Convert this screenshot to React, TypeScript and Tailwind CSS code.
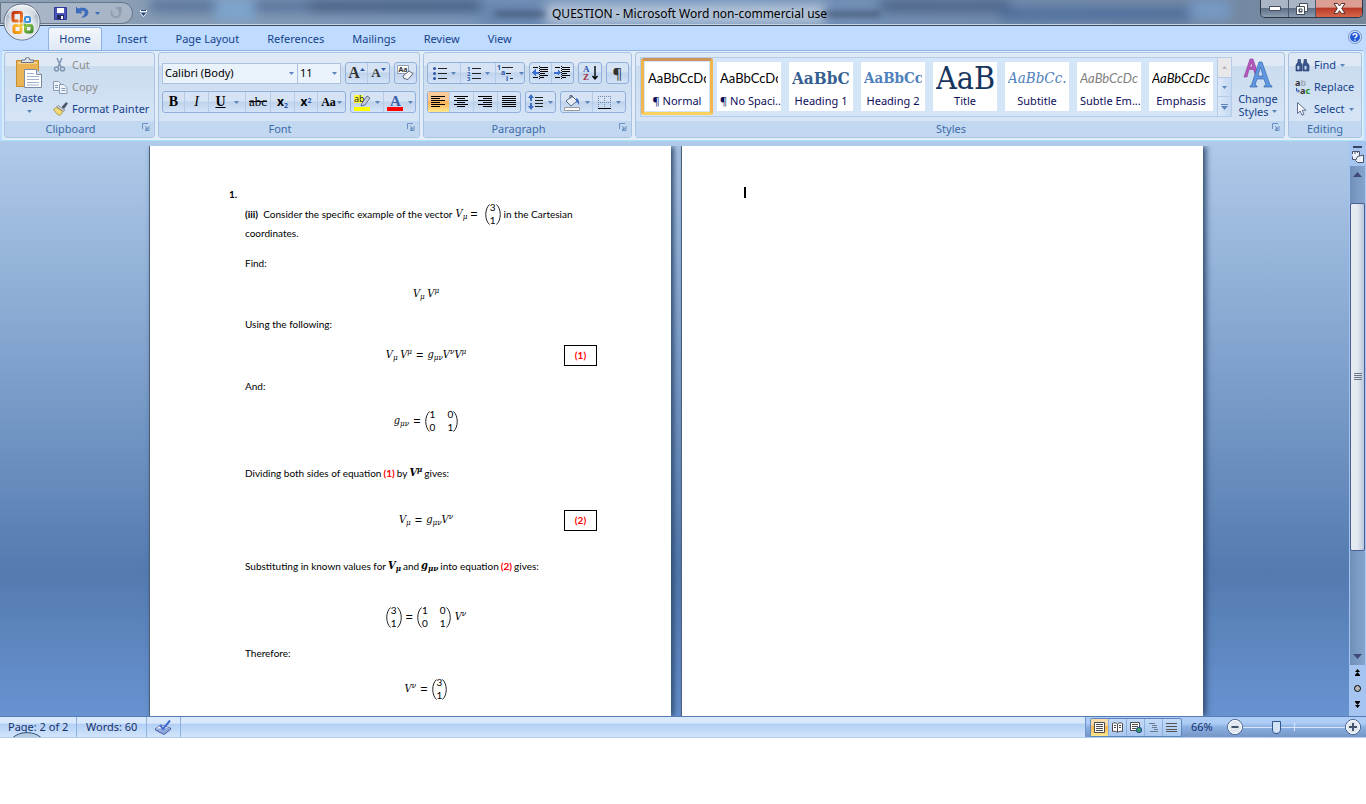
import type { ReactNode } from 'react';
import clsx from 'clsx';

const tabs = ['Insert', 'Page Layout', 'References', 'Mailings', 'Review', 'View'];

const styles = [
  { name: '¶ Normal', sample: 'AaBbCcDc', look: 'font-[Lato] text-[13px] text-black' },
  { name: '¶ No Spaci...', sample: 'AaBbCcDc', look: 'font-[Lato] text-[13px] text-black' },
  { name: 'Heading 1', sample: 'AaBbCc', look: "font-['DejaVu_Serif_Condensed','DejaVu_Serif',serif] text-[17px] font-bold text-[#365f91]" },
  { name: 'Heading 2', sample: 'AaBbCc', look: "font-['DejaVu_Serif_Condensed','DejaVu_Serif',serif] text-[15px] font-bold text-[#4f81bd]" },
  { name: 'Title', sample: 'AaB', look: "font-['DejaVu_Serif_Condensed','DejaVu_Serif',serif] text-[32px] text-[#17365d]" },
  { name: 'Subtitle', sample: 'AaBbCc.', look: "font-['DejaVu_Serif_Condensed','DejaVu_Serif',serif] text-[15px] italic text-[#4f81bd]" },
  { name: 'Subtle Em...', sample: 'AaBbCcDc', look: 'font-[Lato] text-[13px] italic text-[#808080]' },
  { name: 'Emphasis', sample: 'AaBbCcDc', look: 'font-[Lato] text-[13px] italic text-black' },
];

/* ---------- small shared pieces ---------- */

function Arrow({ className = 'fill-[#5b84bd]' }: { className?: string }) {
  return (
    <svg width="5" height="3" viewBox="0 0 5 3" className={clsx('shrink-0', className)} aria-hidden="true">
      <path d="M0 0h5L2.500 3z" />
    </svg>
  );
}

function Group({ title, className, launcher = true, children }: { title: string; className?: string; launcher?: boolean; children: ReactNode }) {
  return (
    <section
      aria-label={title}
      className={clsx(
        'flex flex-col overflow-hidden rounded-[3px] border border-[#a9c4e2] bg-linear-to-b from-[#dee9f5] from-15% via-[#cbdcef] via-16% to-[#d9e7f8]',
        className,
      )}
    >
      <div className="flex h-[68px] min-w-0">{children}</div>
      <footer className="flex h-4 items-center bg-[#c1d8f0] text-[#3e6aaa]">
        <span className="flex-1 text-center">{title}</span>
        {launcher && (
          <button aria-label={`${title} dialog`} className="mr-1 mb-1 ml-[6px]">
            <svg width="8" height="8" viewBox="0 0 8 8" fill="none" stroke="#6b8fc0">
              <path d="M.5 6V.5H6M3 3l3 3M7 3v4.500H3" />
              <path d="M5 4.500v2H3.500z" fill="#6b8fc0" />
            </svg>
          </button>
        )}
      </footer>
    </section>
  );
}

function Bar({ children }: { children: ReactNode }) {
  return (
    <div className="flex h-[22px] divide-x divide-[#b4cbe8] rounded-[3px] border border-[#90b0db] bg-linear-to-b from-[#d5e3f4] from-45% via-[#bfd3ec] via-50% to-[#d3e3f8]">
      {children}
    </div>
  );
}

function Tool({ label, width, drop, active, children }: { label: string; width: string; drop?: boolean; active?: boolean; children: ReactNode }) {
  return (
    <button
      aria-label={label}
      className={clsx(
        'flex items-center justify-center gap-1 leading-5',
        width,
        active && 'bg-linear-to-b from-[#fbc994] from-40% via-[#fbb054] via-50% to-[#fee98d]',
      )}
    >
      {children}
      {drop && <Arrow />}
    </button>
  );
}

function Lines({ rows }: { rows: [number, number][] }) {
  return (
    <svg width="15" height="13" viewBox="0 0 15 13" stroke="#000" shapeRendering="crispEdges">
      {rows.map(([x, w], i) => (
        <path key={i} d={`M${x} ${i * 2 + 0.5}h${w}`} />
      ))}
    </svg>
  );
}

/* ---------- title bar ---------- */

function OfficeLogo() {
  return (
    <svg width="38" height="42" viewBox="0 0 38 42" aria-hidden="true">
      <defs>
        <radialGradient id="orb" cx=".5" cy=".65" r=".6">
          <stop offset="0" stopColor="#ffffff" />
          <stop offset=".6" stopColor="#dfe4ec" />
          <stop offset="1" stopColor="#8f9db0" />
        </radialGradient>
        <linearGradient id="orbTop" x1="0" y1="0" x2="0" y2="1">
          <stop offset="0" stopColor="#fff" stopOpacity=".9" />
          <stop offset="1" stopColor="#fff" stopOpacity="0" />
        </linearGradient>
        <linearGradient id="red" x1="0" y1="0" x2="1" y2="1">
          <stop offset="0" stopColor="#c5300f" />
          <stop offset="1" stopColor="#f28a2a" />
        </linearGradient>
        <linearGradient id="gold" x1="0" y1="1" x2="1" y2="0">
          <stop offset="0" stopColor="#f08a0c" />
          <stop offset="1" stopColor="#fdd04e" />
        </linearGradient>
        <linearGradient id="leaf" x1="1" y1="1" x2="0" y2="0">
          <stop offset="0" stopColor="#3c8a2a" />
          <stop offset="1" stopColor="#9ccb4b" />
        </linearGradient>
      </defs>
      <circle cx="19" cy="22" r="18" fill="url(#orb)" stroke="#5a6b80" />
      <circle cx="19" cy="22" r="17" fill="none" stroke="#eef2f7" />
      <ellipse cx="19" cy="13" rx="14" ry="8" fill="url(#orbTop)" />
      <g fill="none">
        <rect x="10" y="12.500" width="8.500" height="8.500" rx="1.500" stroke="url(#red)" strokeWidth="3" />
        <rect x="22" y="17" width="5" height="5" rx="1" stroke="#3f8fd8" strokeWidth="2" />
        <rect x="11" y="25.500" width="7" height="7" rx="1.500" stroke="url(#gold)" strokeWidth="3" />
        <rect x="22.500" y="25.500" width="6.500" height="6.500" rx="1.500" stroke="url(#leaf)" strokeWidth="3" />
      </g>
      {/* loose squares where the four frames meet */}
      <path d="M16 22.500V19M20.500 15v3M15.500 24h3.500M20.500 29.500v-3.500" stroke="#f4f6f9" />
      <path d="M17 20h2.500v2.500H17z" fill="#f26b21" />
      <path d="M20.500 20H23v2.500h-2.500z" fill="#56a9e8" />
      <path d="M17 23.500h2.500V26H17z" fill="#f8b62c" />
      <path d="M20.500 23.500H23V26h-2.500z" fill="#77b843" />
    </svg>
  );
}

function TitleBar() {
  return (
    <header className="relative flex h-[26px] items-center overflow-hidden border-b border-[#39495e] bg-linear-to-r from-[#8fa0b3] via-[#6f91bd] via-50% to-[#76879c] pt-[2px]">
      {/* glass blotches behind the caption */}
      <div className="absolute inset-0 blur-[6px]" aria-hidden="true">
        <div className="absolute left-[150px] h-3 w-[170px] bg-[#56729a]" />
        <div className="absolute left-[215px] h-5 w-[40px] bg-[#7da4ce]" />
        <div className="absolute left-[310px] h-3 w-[180px] bg-[#425b80]" />
        <div className="absolute left-[480px] h-7 w-[70px] bg-[#6887b0]" />
        <div className="absolute left-[545px] top-1 h-5 w-[280px] bg-[#b4c4d7]" />
        <div className="absolute left-[880px] h-3 w-[130px] bg-[#4a6286]" />
        <div className="absolute left-[1000px] top-2 h-3 w-[200px] bg-[#4c6c9c]" />
        <div className="absolute left-[1190px] h-5 w-[40px] bg-[#7699c5]" />
      </div>
      <div className="absolute inset-0 blur-[3px]" aria-hidden="true">
        <div className="absolute left-[495px] top-3 h-1 w-[50px] bg-[#3a4d69]" />
        <div className="absolute left-[825px] top-3 h-1 w-[55px] bg-[#3a4d69]" />
      </div>
      <div className="absolute inset-x-0 bottom-0 h-px bg-[#c9d5e2]" />
      <div className="relative flex h-[22px] w-[133px] items-center self-start rounded-r-full border border-[#65758a] bg-[#b3bfce]/70 pl-[53px]">
        <button aria-label="Save">
          <svg width="13" height="13" viewBox="0 0 13 13">
            <path d="M.5.5h12v12h-12z" fill="#4b55b8" stroke="#303a96" />
            <path d="M3 1h7v5H3z" fill="#fff" />
            <path d="M3 8h7v4H3z" fill="#23285c" />
            <path d="M7 9h2v3H7z" fill="#fff" />
          </svg>
        </button>
        <button aria-label="Undo" className="ml-[9px]">
          <svg width="13" height="12" viewBox="0 0 13 12">
            <path d="M0 0v6h6L4 4.300c3-1.500 5.500-.500 5 2.200-.400 1.500-1.500 2.500-3 4C10 10 12 8 12 5.500 12 1.500 7-.200 2 2z" fill="#3c6fc4" stroke="#2a559f" strokeWidth=".5" />
          </svg>
        </button>
        <span className="ml-[6px]"><Arrow className="fill-[#3d6eb5]" /></span>
        <button aria-label="Redo" className="ml-[10px]">
          <svg width="12" height="12" viewBox="0 0 12 12" fill="none" stroke="#8d9cb0" strokeWidth="2">
            <path d="M8.500 2.500A4.300 4.300 0 1 1 2 4M6 1h4.500v4" />
          </svg>
        </button>
      </div>
      <button aria-label="Customize Quick Access Toolbar" className="relative ml-[7px]">
        <svg width="7" height="7" viewBox="0 0 7 7"><path d="M0 0h7v2H0zM0 3h7L3.500 7z" fill="#fff" /><path d="M1 0h5v1H1zM1 3h5L3.500 6z" fill="#25467b" /></svg>
      </button>
      <h1 className="relative ml-[405px] text-[12px] whitespace-nowrap text-black">QUESTION - Microsoft Word non-commercial use</h1>
      <div className="absolute top-0 right-[3px] flex h-[18px] overflow-hidden rounded-b-[5px] border border-t-0 border-[#2c3748]">
        <button aria-label="Minimize" className="flex w-7 items-center justify-center border-r border-[#4c5a6e] bg-linear-to-b from-[#a9b5c5] from-45% via-[#5f7087] via-50% to-[#8d9db2]">
          <svg width="12" height="5" viewBox="0 0 12 5"><path d="M.5.5h11v4H.5z" fill="#fff" stroke="#424c5a" /></svg>
        </button>
        <button aria-label="Restore" className="flex w-[27px] items-center justify-center border-r border-[#4c5a6e] bg-linear-to-b from-[#a9b5c5] from-45% via-[#5f7087] via-50% to-[#8d9db2]">
          <svg width="12" height="12" viewBox="0 0 12 12" fill="#fff" stroke="#424c5a">
            <path d="M3.500.500h8v8h-8z" />
            <path fillRule="evenodd" d="M.5 3.500h8v8h-8zM3 6v3h3V6z" />
          </svg>
        </button>
        <button aria-label="Close" className="flex w-[46px] items-center justify-center bg-linear-to-b from-[#dc9d93] from-40% via-[#b83a28] via-50% to-[#d8674a]">
          <svg width="13" height="11" viewBox="0 0 13 11"><path d="M1 .500h3.500l2 2.500 2-2.500H12L8.700 5.400l3.300 5H8.500l-2-2.700-2 2.700H1l3.300-5z" fill="#fff" stroke="#54312d" /></svg>
        </button>
      </div>
    </header>
  );
}

function TabRow() {
  return (
    <nav className="flex h-6 items-end bg-[#bfdbff] pl-12 text-[#15428b]">
      <button className="mr-px h-[23px] w-[54px] rounded-t-[3px] border border-b-0 border-[#8db2e3] bg-linear-to-b from-[#f3f7fc] to-[#dfe9f5] pt-px">Home</button>
      {tabs.map((tab) => (
        <button key={tab} className="h-[23px] px-[14px] pt-[2px]">{tab}</button>
      ))}
      <button aria-label="Help" className="mr-1 mb-[6px] ml-auto">
        <svg width="14" height="14" viewBox="0 0 14 14">
          <circle cx="7" cy="7" r="6.500" fill="#d7e6fb" stroke="#6f8fca" />
          <circle cx="7" cy="7" r="5" fill="#2159d6" />
          <path d="M5 5.500C5 3.200 9 3.200 9 5.300 9 6.700 7 6.700 7 8.300M7 9.500v1.300" fill="none" stroke="#fff" strokeWidth="1.400" />
        </svg>
      </button>
    </nav>
  );
}

/* ---------- ribbon groups ---------- */

function Clipboard() {
  return (
    <Group title="Clipboard" className="w-[151px]">
      <button className="flex w-12 flex-col items-center pt-1 text-[#15428b]">
        <svg width="28" height="31" viewBox="0 0 28 31">
          <path d="M1.500 3.500h22v26h-22z" fill="#eab455" stroke="#c58d34" />
          <path d="M3 5h19v2H3z" fill="#f6d08a" />
          <path d="M6.500 5.500V3h3.500a2.500 2.500 0 0 1 5 0h3.500v2.500z" fill="#dde1e8" stroke="#6d7582" />
          <path d="M9.500 12.500h12l5 5v13h-17z" fill="#fff" stroke="#7a8ba6" />
          <path d="M21.500 12.500v5h5" fill="#dbe6f5" stroke="#7a8ba6" />
          <path d="M12 16.500h7M12 19.500h12M12 22.500h12M12 25.500h12M12 28h12" stroke="#9fb1cd" />
        </svg>
        <span className="mt-[2px] leading-4">Paste</span>
        <span className="mt-1"><Arrow /></span>
      </button>
      <div className="flex flex-col pt-px text-[#15428b]">
        <button className="flex h-[22px] items-center gap-[6px] text-[#8d8d8d]">
          <svg width="13" height="14" viewBox="0 0 13 14" fill="none" stroke="#8095b0" strokeWidth="1.500">
            <path d="M4 0l4 9M9 0L5 9" />
            <circle cx="3.500" cy="11" r="2" /><circle cx="9.500" cy="11" r="2" />
          </svg>
          Cut
        </button>
        <button className="flex h-[22px] items-center gap-1 text-[#8d8d8d]">
          <svg width="15" height="13" viewBox="0 0 15 13" fill="#eef3fa" stroke="#8a9bb5">
            <path d="M.5.500h5l3 3v6h-8z" /><path d="M6.500 3.500h4.500l3 3v6H6.500z" />
            <path d="M2 4.500h3M2 6.500h3M8.500 7.500h4M8.500 9.500h4" />
          </svg>
          Copy
        </button>
        <button className="flex h-[22px] items-center gap-1">
          <svg width="15" height="14" viewBox="0 0 15 14">
            <path d="M9 5l4-4.500 1.500 1L11 6.500z" fill="#4d5a70" stroke="#333e50" strokeWidth=".6" />
            <path d="M5 3.500L12 8 10 9.500 3.500 5z" fill="#c7ccd6" stroke="#6a7078" strokeWidth=".6" />
            <path d="M3.500 5.500L10 9.500 7 13.500 4 12 .500 7.500z" fill="#f2dc78" stroke="#9b8127" strokeWidth=".7" />
          </svg>
          Format Painter
        </button>
      </div>
    </Group>
  );
}

function Font() {
  return (
    <Group title="Font" className="w-[262px]">
      <div className="flex flex-col gap-[7px] pt-[9px] pl-[3px]">
        <div className="flex gap-1">
          <div className="flex">
            <label className="relative flex items-center">
              <span className="sr-only">Font name</span>
              <select className="h-[21px] w-[136px] appearance-none border border-[#abc1de] bg-[#eaf2fb] pl-[2px] text-[11px] leading-4 text-black">
                <option>Calibri (Body)</option>
              </select>
              <span className="pointer-events-none absolute right-1"><Arrow /></span>
            </label>
            <label className="relative flex items-center">
              <span className="sr-only">Font size</span>
              <select className="h-[21px] w-[43px] appearance-none border border-l-0 border-[#abc1de] bg-[#eaf2fb] pl-[2px] text-[11px] leading-4 text-black">
                <option>11</option>
              </select>
              <span className="pointer-events-none absolute right-1"><Arrow /></span>
            </label>
          </div>
          <Bar>
            <Tool label="Grow font" width="w-[22px]">
              <span className="font-['Liberation_Serif',serif] text-[16px] font-bold text-[#333]">A</span>
              <svg width="5" height="3" className="-ml-1 mb-2 fill-[#2b57b0]"><path d="M0 3h5L2.500 0z" /></svg>
            </Tool>
            <Tool label="Shrink font" width="w-[21px]">
              <span className="font-['Liberation_Serif',serif] text-[13px] font-bold text-[#333]">A</span>
              <span className="-ml-1 mb-2 flex"><Arrow className="fill-[#2b57b0]" /></span>
            </Tool>
          </Bar>
          <Bar>
            <Tool label="Clear formatting" width="w-[21px]">
              <svg width="17" height="16" viewBox="0 0 17 16">
                <path d="M.5.500h11v8H.5z" fill="#fff" stroke="#8fa0bb" />
                <text x="1.500" y="7" fontSize="7" fontWeight="700" fill="#333">Aa</text>
                <path d="M6 11l6-5 4 2.500-5 6-4-1z" fill="#f6f7fa" stroke="#5d6573" />
              </svg>
            </Tool>
          </Bar>
        </div>
        <div className="flex gap-1 font-['Liberation_Serif',serif] text-[14px] text-black">
          <Bar>
            <Tool label="Bold" width="w-[22px]"><b>B</b></Tool>
            <Tool label="Italic" width="w-6"><i>I</i></Tool>
            <Tool label="Underline" width="w-[37px]" drop><b className="mr-1 underline">U</b></Tool>
            <Tool label="Strikethrough" width="w-[25px]"><s className="text-[13px]">abc</s></Tool>
            <Tool label="Subscript" width="w-6">
              <span className="font-['Noto_Sans',sans-serif] text-[12px] font-bold">x<sub className="text-[7px] text-[#2b57b0]">2</sub></span>
            </Tool>
            <Tool label="Superscript" width="w-[23px]">
              <span className="font-['Noto_Sans',sans-serif] text-[12px] font-bold">x<sup className="text-[7px] text-[#2b57b0]">2</sup></span>
            </Tool>
            <Tool label="Change case" width="w-[27px]" drop><b className="-mr-[3px] text-[12px]">Aa</b></Tool>
          </Bar>
          <Bar>
            <Tool label="Highlight colour" width="w-[33px]" drop>
              <svg width="17" height="17" viewBox="0 0 17 17">
                <path d="M0 1h9v8H0z" fill="#ffff3c" />
                <text x="0" y="8" fontSize="9" fill="#222" fontFamily="Noto Sans">ab</text>
                <path d="M8 9l5-7 3 2-5 7-4 1z" fill="#c3cddd" stroke="#4d5c78" strokeWidth=".8" />
                <path d="M0 13h16v4H0z" fill="#ff0" />
              </svg>
            </Tool>
            <Tool label="Font colour" width="w-[31px]" drop>
              <svg width="17" height="17" viewBox="0 0 17 17">
                <text x="3" y="12" fontSize="15" fontWeight="700" fill="#3b62ad" fontFamily="Liberation Serif">A</text>
                <path d="M0 13h16v4H0z" fill="#f00" />
              </svg>
            </Tool>
          </Bar>
        </div>
      </div>
    </Group>
  );
}

function ListIcon({ marks }: { marks: ReactNode }) {
  return (
    <svg width="14" height="15" viewBox="0 0 14 15" fontSize="6" fontWeight="700" fill="#2f55a8" fontFamily="Noto Sans">
      {marks}
      <path d="M5 2.500h9M5 7.500h9M5 12.500h9" stroke="#222" shapeRendering="crispEdges" />
    </svg>
  );
}

function IndentIcon({ flip }: { flip?: boolean }) {
  return (
    <svg width="17" height="14" viewBox="0 0 17 14" shapeRendering="crispEdges">
      <path d="M1 1.500h5M8 1.500h8M8 3.500h8M8 5.500h8M8 7.500h5M8 9.500h8M1 11.500h5M8 11.500h4" stroke="#000" />
      <path d="M7.500 0v14" stroke="#000" strokeDasharray="1 1" />
      <path d={flip ? 'M7 6.500L3.500 3v2.500H0v2h3.500V10z' : 'M0 6.500L3.500 3v2.500H7v2H3.500V10z'} fill="#3c6fd0" />
    </svg>
  );
}

function Paragraph() {
  return (
    <Group title="Paragraph" className="w-[209px]">
      <div className="flex flex-col gap-[7px] pt-[9px] pl-[3px]">
        <div className="flex gap-1">
          <Bar>
            <Tool label="Bullets" width="w-[33px]" drop>
              <ListIcon marks={<><circle cx="1.500" cy="2.500" r="1.500" /><circle cx="1.500" cy="7.500" r="1.500" /><circle cx="1.500" cy="12.500" r="1.500" /></>} />
            </Tool>
            <Tool label="Numbering" width="w-[35px]" drop>
              <ListIcon marks={<><text y="5">1</text><text y="10">2</text><text y="15">3</text></>} />
            </Tool>
            <Tool label="Multilevel list" width="w-[28px]" drop>
              <svg width="18" height="16" viewBox="0 0 18 16" fontSize="7" fontWeight="700" fill="#2f55a8" fontFamily="Noto Sans">
                <text x="0" y="5">1</text><text x="4" y="10">a</text><text x="9" y="16">i</text>
                <path d="M5 2.500h11M9 8.500h5M13 13.500h3" stroke="#222" shapeRendering="crispEdges" />
              </svg>
            </Tool>
          </Bar>
          <Bar>
            <Tool label="Decrease indent" width="w-[22px]"><IndentIcon /></Tool>
            <Tool label="Increase indent" width="w-[21px]"><IndentIcon flip /></Tool>
          </Bar>
          <Bar>
            <Tool label="Sort" width="w-[22px]">
              <svg width="15" height="16" viewBox="0 0 15 16" fontSize="9" fontWeight="700" fontFamily="Liberation Serif">
                <text x="0" y="7" fill="#2f55a8">A</text><text x="0" y="15" fill="#a3282f">Z</text>
                <path d="M12 1v13M9.500 11l2.500 3 2.500-3" stroke="#000" fill="none" strokeWidth="1.400" />
              </svg>
            </Tool>
          </Bar>
          <Bar>
            <Tool label="Show formatting marks" width="w-[21px]"><span className="text-[15px] text-[#333]">¶</span></Tool>
          </Bar>
        </div>
        <div className="flex gap-1">
          <Bar>
            <Tool label="Align left" width="w-[22px]" active><Lines rows={[[0, 14], [0, 9], [0, 14], [0, 9], [0, 14], [0, 9]]} /></Tool>
            <Tool label="Centre" width="w-6"><Lines rows={[[0, 14], [3, 8], [0, 14], [3, 8], [0, 14], [3, 8]]} /></Tool>
            <Tool label="Align right" width="w-6"><Lines rows={[[0, 14], [5, 9], [0, 14], [5, 9], [0, 14], [5, 9]]} /></Tool>
            <Tool label="Justify" width="w-[22px]"><Lines rows={[[0, 14], [0, 14], [0, 14], [0, 14], [0, 14], [0, 14]]} /></Tool>
          </Bar>
          <Bar>
            <Tool label="Line spacing" width="w-[29px]" drop>
              <svg width="16" height="16" viewBox="0 0 16 16">
                <path d="M3 0l3 4H4v3H2V4H0zM3 16l3-4H4V9H2v3H0z" fill="#3c6fc4" />
                <path d="M7 3.500h8M7 6.500h8M7 9.500h8M7 12.500h8" stroke="#222" shapeRendering="crispEdges" />
              </svg>
            </Tool>
          </Bar>
          <Bar>
            <Tool label="Shading" width="w-[32px]" drop>
              <svg width="17" height="17" viewBox="0 0 17 17">
                <path d="M2 7l6-5 5 5-6 5z" fill="#e9eef6" stroke="#5a6780" />
                <path d="M6 5V1.500h2V4" fill="none" stroke="#5a6780" />
                <path d="M12 4c3 1 3.500 4 3 7-1-2-2-3-3-3z" fill="#3f6dc0" />
                <path d="M.5 13.500h15v3H.5z" fill="#fff" stroke="#999" />
              </svg>
            </Tool>
            <Tool label="Borders" width="w-[32px]" drop>
              <svg width="15" height="15" viewBox="0 0 15 15" fill="none" stroke="#6c86ad" strokeDasharray="1 1" shapeRendering="crispEdges">
                <path d="M1 1.500h13M1 7.500h13M1.500 1v12M7.500 1v12M13.500 1v12" />
                <path d="M1 13.500h13" stroke="#000" strokeDasharray="none" />
              </svg>
            </Tool>
          </Bar>
        </div>
      </div>
    </Group>
  );
}

function Styles() {
  return (
    <Group title="Styles" className="min-w-0 flex-1">
      <div className="mt-[4px] ml-1 flex h-[60px] min-w-0 flex-1 overflow-hidden border border-[#b5cce9] bg-[#d4e5f8]">
        {styles.map((style, i) => (
          <button
            key={style.name}
            className={clsx(
              'flex h-[57px] w-[72px] shrink-0 flex-col border-[3px]',
              i === 0 ? 'rounded-[3px] border-[#f3b64c] border-t-[#cf935a] border-b-[#fcd25c]' : 'border-transparent',
            )}
          >
            <span className="flex w-full flex-1 flex-col overflow-hidden border border-transparent bg-white bg-clip-padding px-[3px]">
              <span className={clsx('flex h-[31px] w-full items-center overflow-hidden pt-px leading-none whitespace-nowrap', style.look)}>{style.sample}</span>
              <span className="w-full text-center leading-4 whitespace-nowrap text-[#0c0c5c]">{style.name}</span>
            </span>
          </button>
        ))}
        <div className="ml-auto flex w-[14px] flex-col divide-y divide-[#b5cce9] border-l border-[#b5cce9] bg-linear-to-r from-[#dce9f9] to-[#c5d9f1]">
          <button aria-label="Scroll up" className="flex flex-1 items-center justify-center bg-[#e8e8ea]"><Arrow className="rotate-180 fill-[#b0b4bb]" /></button>
          <button aria-label="Scroll down" className="flex flex-1 items-center justify-center"><Arrow /></button>
          <button aria-label="More styles" className="flex flex-1 items-center justify-center">
            <svg width="7" height="6" viewBox="0 0 7 6" fill="#5b84bd"><path d="M0 0h7v1H0zM0 2h7L3.500 6z" /></svg>
          </button>
        </div>
      </div>
      <button className="flex w-[52px] shrink-0 flex-col items-center pt-[5px] leading-[13px] text-[#15428b]">
        <svg width="30" height="30" viewBox="0 0 30 30" aria-hidden="true">
          <path d="M1 19L7 1h3l5 15h-3l-1.500-4.500H6L4 19zM6.700 9h3L8.500 4.500z" fill="#b654bd" stroke="#8b3a96" strokeWidth=".6" />
          <path d="M7 28l1.500-1L16 4h3l8 23 2 1v1h-8v-1l2-1-2-6h-7l-2 6 2 1v1H7zM14.800 18H20l-2.500-9z" fill="#5f97e0" stroke="#3a68b0" strokeWidth=".7" />
        </svg>
        <span className="mt-1">Change</span>
        <span className="flex items-center gap-1">Styles <Arrow /></span>
      </button>
    </Group>
  );
}

function Editing() {
  return (
    <Group title="Editing" className="w-[74px]" launcher={false}>
      <div className="flex flex-col pt-px pl-[6px] text-[#15428b]">
        <button className="flex h-[22px] items-center gap-1">
          <svg width="15" height="13" viewBox="0 0 15 13" fill="#3b568d" stroke="#24396a" strokeWidth=".6">
            <path d="M3 .500h2.500V3L7 5.500V12H1V6l2-3zM9 .500h2.500V3L14 6v6H8V5.500L9 3z" />
            <path d="M2.300 7h2v3.500h-2zM9.500 7h2v3.500h-2z" fill="#c9dcf5" stroke="none" />
          </svg>
          Find <Arrow />
        </button>
        <button className="flex h-[22px] items-center gap-[3px]">
          <svg width="16" height="15" viewBox="0 0 16 15" fontSize="9" fontWeight="700" fontFamily="Noto Sans">
            <text x="0" y="6" fill="#333">a<tspan fill="#a3abb8">b</tspan></text>
            <text x="5" y="14" fill="#333">a<tspan fill="#1f8f2c">c</tspan></text>
            <path d="M1.500 8v3H4M3 9.500L4.500 11 3 12.500" fill="none" stroke="#2f55a8" />
          </svg>
          Replace
        </button>
        <button className="flex h-[22px] items-center gap-1">
          <svg width="13" height="14" viewBox="0 0 13 14" className="ml-[2px]"><path d="M.5.500v11l2.700-2.500L5 13.200l2-.900-1.800-4H9z" fill="#fff" stroke="#5d6f94" /></svg>
          Select <Arrow />
        </button>
      </div>
    </Group>
  );
}

/* ---------- document ---------- */

function Sym({ base, sub, sup, bold }: { base: string; sub?: string; sup?: string; bold?: boolean }) {
  return (
    <span className={clsx("font-['DejaVu_Serif_Condensed','DejaVu_Serif',serif] text-[11px] italic", bold && 'font-bold')}>
      {base}
      {sub && <sub className="text-[8px]">{sub}</sub>}
      {sup && <sup className="text-[8px]">{sup}</sup>}
    </span>
  );
}

function Eq() {
  return <span className="font-['Noto_Sans',sans-serif] text-[13px] leading-none">=</span>;
}

function Paren({ close }: { close?: boolean }) {
  return (
    <svg width="5" height="21" viewBox="0 0 5 21" fill="none" stroke="#222" aria-hidden="true">
      <path d={close ? 'M.5.500C5.500 5 5.500 16 .5 20.500' : 'M4.500.500C-.500 5-.500 16 4.500 20.500'} />
    </svg>
  );
}

function Matrix({ rows }: { rows: number[][] }) {
  return (
    <span className="inline-flex items-center align-middle">
      <Paren />
      <span className="flex flex-col">
        {rows.map((row, i) => (
          <span key={i} className="flex h-[13px] items-center gap-3 font-[Lato] text-[10px]">
            {row.map((n, j) => <span key={j}>{n}</span>)}
          </span>
        ))}
      </span>
      <Paren close />
    </span>
  );
}

function Equation({ className, tag, children }: { className: string; tag?: string; children: ReactNode }) {
  return (
    <div className={clsx('grid w-[362px] grid-cols-[1fr_auto_1fr] items-center', className)}>
      <span />
      <div className="flex items-center gap-1">{children}</div>
      {tag && (
        <span className="mr-[10px] flex h-[21px] w-[33px] items-center justify-center justify-self-end border border-black font-bold text-[#f00]">{tag}</span>
      )}
    </div>
  );
}

function PageOne() {
  return (
    <article className="w-[522px] shrink-0 overflow-hidden border-l border-[#4c5f78] bg-white pt-[38px] pl-[79px] font-[Lato] text-[10px] text-black shadow-[3px_0_6px_#2f4a70]">
      <div className="flex h-5 items-center font-bold">1.</div>
      <div className="ml-4">
        <p className="flex h-5 items-center gap-[3px] whitespace-pre">
          <span><b>(iii)</b>  Consider the specific example of the vector</span>
          <Sym base="V" sub="μ" />
          <Eq />
          <span className="ml-1"><Matrix rows={[[3], [1]]} /></span>
          <span>in the Cartesian</span>
        </p>
        <p className="flex h-[18px] items-center">coordinates.</p>
        <p className="flex h-[42px] items-center">Find:</p>
        <Equation className="h-5"><span><Sym base="V" sub="μ" /> <Sym base="V" sup="μ" /></span></Equation>
        <p className="flex h-10 items-center">Using the following:</p>
        <Equation className="h-[22px]" tag="(1)">
          <span><Sym base="V" sub="μ" /> <Sym base="V" sup="μ" /></span>
          <Eq />
          <span><Sym base="g" sub="μν" /><Sym base="V" sup="ν" /><Sym base="V" sup="μ" /></span>
        </Equation>
        <p className="flex h-10 items-center">And:</p>
        <Equation className="h-[30px]"><Sym base="g" sub="μν" /> <Eq /> <Matrix rows={[[1, 0], [0, 1]]} /></Equation>
        <p className="flex h-[74px] items-center gap-[2px]">
          Dividing both sides of equation <b className="text-[#f00]">(1)</b> by <Sym base="V" sup="μ" bold /> gives:
        </p>
        <Equation className="h-[18px]" tag="(2)">
          <Sym base="V" sub="μ" /> <Eq /> <span><Sym base="g" sub="μν" /><Sym base="V" sup="ν" /></span>
        </Equation>
        <p className="flex h-[76px] items-center gap-[2px]">
          Substituting in known values for <Sym base="V" sub="μ" bold /> and <Sym base="g" sub="μν" bold /> into equation{' '}
          <b className="text-[#f00]">(2)</b> gives:
        </p>
        <Equation className="h-[26px]">
          <Matrix rows={[[3], [1]]} /> <Eq /> <Matrix rows={[[1, 0], [0, 1]]} /><Sym base="V" sup="ν" />
        </Equation>
        <p className="flex h-[46px] items-center">Therefore:</p>
        <Equation className="h-[22px]"><Sym base="V" sup="ν" /> <Eq /> <Matrix rows={[[3], [1]]} /></Equation>
      </div>
    </article>
  );
}

function ScrollBar() {
  return (
    <aside className="flex w-[17px] shrink-0 flex-col items-center bg-[#a5c4ef] pt-1">
      <button aria-label="Split" className="mt-px h-[2px] w-[9px] bg-[#39435f]" />
      <button aria-label="Ruler" className="my-[3px]">
        <svg width="12" height="12" viewBox="0 0 12 12" fill="#eef3fb" stroke="#4d556d">
          <path d="M.5 3V.500h7v8h-7V5.500M3 .500V3M5.500.500V2" /><path d="M5.500 5.500L11.500 4v7.500h-6l-2-2z" />
        </svg>
      </button>
      <div className="flex w-[15px] flex-1 flex-col items-center bg-linear-to-r from-[#6f90ba] to-[#86a5cd]">
        <button aria-label="Scroll up" className="flex h-[37px] pt-[6px]">
          <svg width="9" height="5" viewBox="0 0 9 5" fill="#3f4a77"><path d="M0 5h9L4.500 0z" /></svg>
        </button>
        <div className="flex w-full grow-[352] basis-0 items-center justify-center rounded-[2px] border border-[#4a5f96] bg-linear-to-r from-[#e6ebf1] from-45% to-[#b8c8dc]">
          <svg width="8" height="8" viewBox="0 0 8 8" stroke="#6c7686" shapeRendering="crispEdges"><path d="M0 .500h8M0 2.500h8M0 4.500h8M0 6.500h8" /></svg>
        </div>
        <div className="flex w-full grow-[110] basis-0 items-end justify-center pb-[6px]">
          <button aria-label="Scroll down"><svg width="9" height="5" viewBox="0 0 9 5" fill="#3f4a77"><path d="M0 0h9L4.500 5z" /></svg></button>
        </div>
      </div>
      <div className="flex h-[51px] flex-col items-center justify-around pb-1">
        <button aria-label="Previous page"><svg width="5" height="7" viewBox="0 0 5 7"><path d="M0 3h5L2.500 0zM0 6h5L2.500 3zM0 6h5v1H0z" /></svg></button>
        <button aria-label="Select browse object"><svg width="7" height="7" viewBox="0 0 7 7"><circle cx="3.500" cy="3.500" r="3" fill="#b8b8b8" stroke="#000" /></svg></button>
        <button aria-label="Next page"><svg width="5" height="7" viewBox="0 0 5 7"><path d="M0 0h5v1H0zM0 1h5L2.500 4zM0 4h5L2.500 7z" /></svg></button>
      </div>
    </aside>
  );
}

/* ---------- status bar ---------- */

function ZoomButton({ label, d }: { label: string; d: string }) {
  return (
    <button aria-label={label}>
      <svg width="16" height="16" viewBox="0 0 16 16">
        <circle cx="8" cy="8" r="7.500" fill="#dfe7f1" stroke="#46628f" />
        <circle cx="8" cy="8" r="6.500" fill="none" stroke="#fff" />
        <path d={d} stroke="#44546c" strokeWidth="2" />
      </svg>
    </button>
  );
}

const views = [
  { name: 'Print Layout', d: 'M.5.500h10v10H.5zM2 2.500h7M2 4.500h7M2 6.500h7M2 8.500h7', ink: '#4c4c4c', paper: '#fff' },
  { name: 'Full Screen Reading', d: 'M.5 1.500C2 .500 4 .500 5.500 2 7 .500 9 .500 10.500 1.500v8C9 9 7 9 5.500 10.500 4 9 2 9 .5 9.500zM5.500 2v8M2 3.500h2M2 5.500h2M7 3.500h2M7 5.500h2', ink: '#4c4c4c', paper: '#fff' },
  { name: 'Web Layout', d: 'M.5.500h9v8h-9zM2 2.500h6M2 4.500h6M2 6.500h4', ink: '#4c4c4c', paper: '#fff' },
  { name: 'Outline', d: 'M1 1.500h6M4 3.500h5M4 5.500h5M6 7.500h4M2 9.500h8', ink: '#6d7b8e', paper: 'none' },
  { name: 'Draft', d: 'M0 1.500h11M0 4.500h11M0 7.500h11M0 9.500h11', ink: '#555', paper: 'none' },
];

function StatusBar() {
  return (
    <footer className="relative flex h-[22px] shrink-0 overflow-hidden border-t border-b border-t-[#567db1] border-b-[#b3cdec] bg-linear-to-b from-[#d9e8fb] from-30% via-[#b2d0f5] via-36% to-[#d3e5fb] text-[#15306b]">
      <div className="flex items-center divide-x divide-[#8db0dd]">
        <span className="flex h-full w-[77px] items-center pl-2">Page: 2 of 2</span>
        <span className="flex h-full w-[70px] items-center pl-[9px]">Words: 60</span>
        <button aria-label="Proofing" className="flex h-full w-[34px] items-center justify-center">
          <svg width="17" height="15" viewBox="0 0 17 15">
            <path d="M.5 8.500L6 5l9.500 3L9 13.500z" fill="#fff" stroke="#6a7db0" />
            <path d="M.5 8.500V10L9 14.500l6.500-5V8" fill="#8fa6da" stroke="#4760a8" />
            <path d="M5 5l3 4 7-8.500" fill="none" stroke="#3f69cf" strokeWidth="2" />
          </svg>
        </button>
        <span />
      </div>
      <svg width="28" height="5" viewBox="0 0 28 5" className="absolute bottom-0 left-[13px]"><path d="M0 5.500C7-1 21-1 28 5.500" fill="#b8cde0" stroke="#2f5580" /></svg>
      <div className="ml-auto flex w-[281px] items-center border-l border-[#6f97cf] bg-linear-to-b from-[#aecdf6] from-30% via-[#8bb0e3] via-50% to-[#7596c6] pl-1">
        <div className="flex h-[19px] divide-x divide-[#8db0dd] rounded-[2px] border border-[#5f86bd] bg-linear-to-b from-[#c3dbf8] to-[#a8c6ee]">
          {views.map((view, i) => (
            <button
              key={view.name}
              aria-label={view.name}
              className={clsx('flex w-[18px] items-center justify-center', i === 0 && 'bg-linear-to-b from-[#f8d9a8] from-30% via-[#f7b64b] via-50% to-[#fee991]')}
            >
              <svg width="12" height="11" viewBox="0 0 12 11" fill={view.paper} stroke={view.ink}>
                <path d={view.d} />
                {view.name === 'Web Layout' && <circle cx="9" cy="8" r="2.700" fill="#3c9a66" stroke="#244f94" />}
              </svg>
            </button>
          ))}
        </div>
        <span className="ml-[9px] w-9">66%</span>
        <ZoomButton label="Zoom out" d="M4.500 8h7" />
        <label className="relative flex w-[102px] items-center">
          <span className="sr-only">Zoom</span>
          <span className="absolute inset-x-0 h-px bg-[#d7e5f7]" />
          <span className="absolute left-[51px] h-2 w-px bg-[#d7e5f7]" />
          <input
            type="range"
            min={0}
            max={100}
            defaultValue={31}
            className="relative h-[14px] w-full appearance-none bg-transparent [&::-webkit-slider-thumb]:h-[13px] [&::-webkit-slider-thumb]:w-[9px] [&::-webkit-slider-thumb]:appearance-none [&::-webkit-slider-thumb]:rounded-t-[1px] [&::-webkit-slider-thumb]:rounded-b-[5px] [&::-webkit-slider-thumb]:border [&::-webkit-slider-thumb]:border-[#31578f] [&::-webkit-slider-thumb]:bg-[#d3e2f5]"
          />
        </label>
        <ZoomButton label="Zoom in" d="M4 8h8M8 4v8" />
      </div>
    </footer>
  );
}

export default function App() {
  return (
    <div className="relative flex h-[calc(100vh-66px)] flex-col overflow-hidden bg-[#bfdbff] font-['Noto_Sans','Open_Sans',sans-serif] text-[11px]">
      <TitleBar />
      <button aria-label="Office Button" className="absolute top-0 left-[3px] z-10"><OfficeLogo /></button>
      <TabRow />
      <div className="mx-[2px] flex shrink-0 gap-[3px] rounded-[3px] border border-t-[#8db2e3] border-r-[#c9effb] border-b-[#a5e7f6] border-l-[#c9effb] bg-[#e3edf8] px-px pt-px pb-[2px]">
        <Clipboard />
        <Font />
        <Paragraph />
        <Styles />
        <Editing />
      </div>
      <main className="flex min-h-0 flex-1 bg-linear-to-b from-[#b0cbea] via-[#547bb0] via-75% to-[#6893d1]">
        <div className="mt-[5px] flex min-w-0 flex-1 justify-center gap-[10px] overflow-hidden pl-[3px]">
          <PageOne />
          <article className="w-[522px] shrink-0 border-l border-[#4c5f78] bg-white pt-[41px] pl-[62px] shadow-[3px_0_6px_#2f4a70]">
            <div className="h-[11px] w-[2px] bg-black" />
          </article>
        </div>
        <ScrollBar />
      </main>
      <StatusBar />
    </div>
  );
}
